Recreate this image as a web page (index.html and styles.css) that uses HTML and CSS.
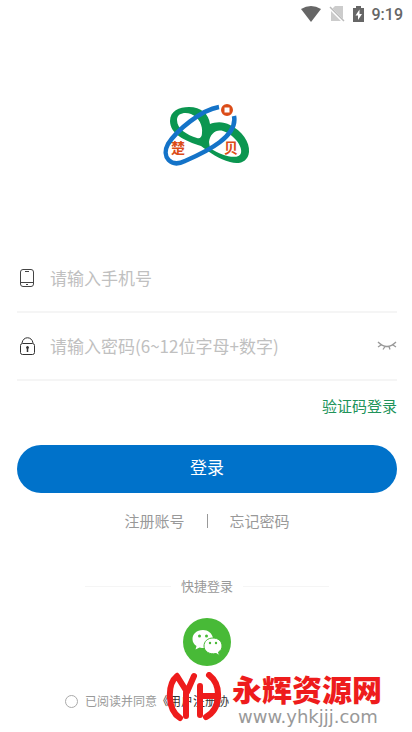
FILE: index.html
```html
<!DOCTYPE html>
<html lang="zh-CN">
<head>
<meta charset="utf-8">
<meta name="viewport" content="width=device-width, initial-scale=1">
<title>登录</title>
<link rel="stylesheet" href="styles.css">
</head>
<body>
<header class="status">
  <svg width="20" height="16" viewBox="0 0 20 16" aria-hidden="true"><path d="M0 3Q10-3 20 3L10 16Z" fill="#666"/></svg>
  <svg width="16" height="16" viewBox="0 0 16 16" aria-hidden="true"><path d="M6 0h8v15H2V4Z" fill="#ccc"/><path d="M0 1L15 16" stroke="#fff" stroke-width="3"/><path d="M1 1L15 15" stroke="#bbb" stroke-width="1.5"/></svg>
  <svg width="11" height="16" viewBox="0 0 11 16" aria-hidden="true"><path d="M3 0h5v2h3v14H0V2h3Z" fill="#666"/><path d="M6.500 3.500L2.500 9.500h2.500V14l4-6H6.500Z" fill="#fff"/></svg>
  <span>9:19</span>
</header>
<main class="page">
  <svg class="logo" width="88" height="64" viewBox="0 0 88 64" role="img" aria-label="楚贝">
    <g fill="none">
      <path fill-rule="evenodd" fill="#0b9650" d="M7 18C7 8 16 4 26 4C38 4 46 11 47 21C52 19 60 18 67 22C79 28 87 39 86 49C85 59 76 62 67 59C56 56 47 50 38 43C22 38 7 31 7 18ZM14 17C14 10 22 9 28 11C36 14 40 23 39 30C39 34 37 36 34 35C24 32 14 26 14 17ZM46 39C47 31 53 26 60 28C70 31 80 43 78 50C76 57 60 54 47 45Z"/>
      <path d="M56 4C38 7 14 27 5 41C-2 54 8 65 22 58C45 48 75 33 71 13" stroke="#1473c8" stroke-width="4.500"/>
      <circle cx="64" cy="7" r="4.500" stroke="#db4c18" stroke-width="3"/>
      <path d="M61 4h6v6h-6Z" fill="#fff" stroke="#db4c18" stroke-width="1"/>
    </g>
    <text class="logo-text" x="8" y="50">楚</text>
    <text class="logo-text" x="61" y="50">贝</text>
  </svg>
  <form class="form">
    <div class="field">
      <label for="phone" aria-label="手机号"><svg width="20" height="20" viewBox="0 0 20 20" fill="none" stroke="#444"><rect x="3.500" y="1.500" width="13" height="17" rx="2.500"/><path d="M4 14.500h12M8 3.500h4M9 16.500h2"/></svg></label>
      <input id="phone" type="tel" placeholder="请输入手机号">
    </div>
    <div class="field">
      <label for="password" aria-label="密码"><svg width="20" height="20" viewBox="0 0 20 20" fill="none" stroke="#333"><rect x="3.500" y="7.500" width="14" height="11" rx="2"/><path d="M5 7C6 0 15 0 16 7"/><path d="M10.500 12v4" stroke-width="1.500"/><circle cx="10.500" cy="11.500" r="1" fill="#333"/></svg></label>
      <input id="password" type="password" placeholder="请输入密码(6~12位字母+数字)">
      <button class="eye" type="button" aria-label="显示密码"><svg width="20" height="12" viewBox="0 0 20 12" fill="none" stroke="#999" stroke-width="1.300"><path d="M1 2Q10 11 19 2M4 5L1 7M8 6.500L6 9.500M12 6.500L13 9.500M16 5L19 7"/></svg></button>
    </div>
    <a class="code" href="#code">验证码登录</a>
    <button class="submit" type="submit">登录</button>
  </form>
  <nav class="links"><a href="#register">注册账号</a><span class="bar"></span><a href="#forgot">忘记密码</a></nav>
  <div class="quick"><span>快捷登录</span></div>
  <button class="wechat" type="button" aria-label="微信登录">
    <svg width="48" height="48" viewBox="0 0 48 48"><circle cx="24" cy="24" r="24" fill="#48ba37"/>
      <path d="M20 12C13.500 12 9.500 16 9.500 21C9.500 24 11 26.500 13.500 28L12.500 31.500L16.500 29.500C27 32 31 26 30 20C29 15 25 12 20 12Z" fill="#fff"/>
      <path d="M30 20C24.500 20 21 23.500 21 28C21 33 26 37 33 35.500L36.500 37.500L35.500 34C38 32.500 39 30.500 39 28C39 23 35 20 30 20Z" fill="#fff" stroke="#48ba37" stroke-width="1"/>
      <g fill="#48ba37"><circle cx="16.500" cy="18" r="1.500"/><circle cx="23.500" cy="18" r="1.500"/><circle cx="27" cy="25" r="1.200"/><circle cx="33" cy="25" r="1.200"/></g></svg>
  </button>
  <footer class="terms">
    <input id="agree" type="checkbox"><label for="agree">已阅读并同意</label><a href="#terms">《用户注册协</a>
    <div class="mark">
      <svg width="56" height="50" viewBox="0 0 56 50" fill="none" stroke="#ee1c1c" stroke-width="6" stroke-linecap="round" stroke-linejoin="round" aria-hidden="true">
        <path d="M11 4C1 12 1 38 14 46M11 4L21 20L28 4M20 20V44M34 14V43M34 24H50M43 3C56 13 55 37 40 45"/>
      </svg>
      <div class="mark-text"><strong>永辉资源网</strong><span>www.yhkjjj.com</span></div>
    </div>
  </footer>
</main>
</body>
</html>
```
FILE: styles.css
```css
* { box-sizing: border-box; }
body {
  min-height: 100vh;
  margin: 0;
  background: #fff;
  color: #999;
  font-family: "Noto Sans CJK SC", sans-serif;
  font-size: 15px;
  line-height: 24px;
}
a { color: inherit; text-decoration: none; }
button { border: 0; padding: 0; background: none; font: inherit; }
svg { display: block; }
.status {
  display: flex;
  justify-content: flex-end;
  align-items: center;
  gap: 8px;
  height: 28px;
  padding-right: 9px;
  color: #666;
  font: 500 16px Roboto, sans-serif;
}
.page {
  display: flex;
  flex-direction: column;
  padding: 0 15px 0 17px;
}
.logo { align-self: center; margin-top: 75px; }
.logo-text { fill: #db4c18; font-size: 14px; font-weight: 700; }
.form { display: flex; flex-direction: column; margin-top: 78px; }
.field {
  display: flex;
  align-items: center;
  height: 68px;
  border-bottom: 2px solid #f5f5f5;
}
.field input {
  flex: 1;
  min-width: 0;
  margin-left: 13px;
  padding: 0;
  border: 0;
  outline: 0;
  background: none;
  font: inherit;
  font-size: 17px;
}
.field input::placeholder { color: #c0c0c0; opacity: 1; }
.code { align-self: flex-end; margin-top: 13px; color: #21935a; }
.submit {
  height: 48px;
  margin-top: 27px;
  padding-bottom: 4px;
  border-radius: 24px;
  background: #0072ca;
  color: #fff;
  font-size: 17px;
}
.links {
  display: flex;
  justify-content: center;
  align-items: center;
  gap: 22px;
  margin-top: 16px;
}
.bar { width: 1px; height: 14px; background: #999; }
.quick {
  display: flex;
  align-items: center;
  gap: 10px;
  margin: 41px 68px 0;
  font-size: 13px;
}
.quick::before, .quick::after { content: ""; flex: 1; height: 1px; background: #f5f5f5; }
.wechat { align-self: center; margin-top: 20px; }
.terms {
  position: relative;
  display: flex;
  align-items: center;
  margin: 23px 0 0 48px;
  font-size: 12px;
  white-space: nowrap;
}
.terms input {
  appearance: none;
  width: 13px;
  height: 13px;
  margin: 0 7px 0 0;
  border: 1px solid #aaa;
  border-radius: 50%;
}
.terms a { color: #333; }
.mark {
  position: absolute;
  top: -17px;
  left: 101px;
  display: flex;
  align-items: flex-start;
  gap: 10px;
}
.mark-text { display: flex; flex-direction: column; gap: 3px; }
.mark-text strong { color: #ee1c1c; font-size: 30px; line-height: 32px; font-weight: 900; }
.mark-text span { padding-left: 6px; color: #999; font: 18px/20px "DejaVu Sans", sans-serif; }
```
